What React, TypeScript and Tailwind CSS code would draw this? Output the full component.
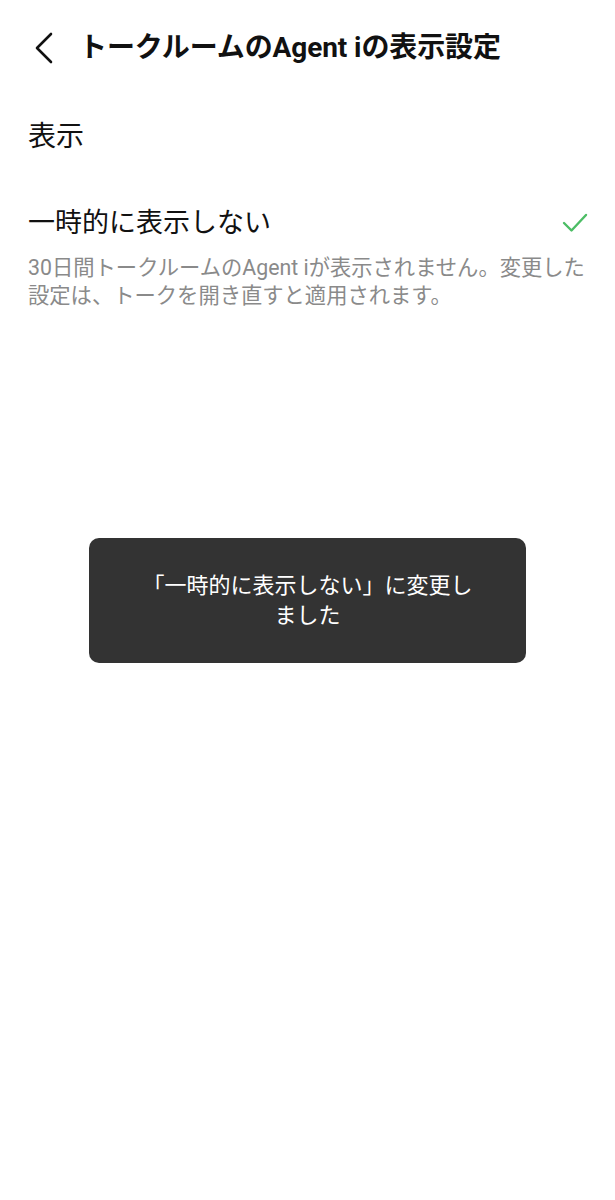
import React from "react";

export default function App() {
  return (
    <div
      className="relative w-[615px] h-[1200px] bg-white overflow-hidden"
      style={{ fontFamily: 'Roboto, "Noto Sans CJK JP", sans-serif' }}
    >
      <header className="flex items-center h-[96px] pl-[30px]">
        <svg width="28" height="34" viewBox="0 0 28 34" className="shrink-0">
          <path d="M21 3 L7 17 L21 31" fill="none" stroke="#111" strokeWidth="2.6" strokeLinecap="round" strokeLinejoin="round" />
        </svg>
        <h1 className="ml-[21px] text-[28px] font-bold text-[#111] tracking-[-0.1px]">
          トークルームのAgent iの表示設定
        </h1>
      </header>
      <div className="px-[28px]">
        <div className="pt-[16px] text-[28px] text-[#111] leading-[50px]">表示</div>
        <div className="mt-[41px] flex items-center justify-between">
          <div className="text-[27px] text-[#111] leading-[40px]">一時的に表示しない</div>
          <svg width="26" height="22" viewBox="0 0 26 22" className="mr-[-1px]">
            <path d="M2 11 L9.5 18.5 L24 3" fill="none" stroke="#4cbd65" strokeWidth="2.4" strokeLinecap="round" strokeLinejoin="round" />
          </svg>
        </div>
        <p className="mt-[11px] text-[21.3px] leading-[28px] text-[#8a8a8a]">
          30日間トークルームのAgent iが表示されません。変更した設定は、トークを開き直すと適用されます。
        </p>
      </div>
      <div className="absolute left-[89px] top-[538px] w-[437px] h-[125px] rounded-[10px] bg-[#333333] flex items-center justify-center px-[48px]">
        <p className="text-center text-white text-[22px] leading-[30px]">
          「一時的に表示しない」に変更しました
        </p>
      </div>
    </div>
  );
}
